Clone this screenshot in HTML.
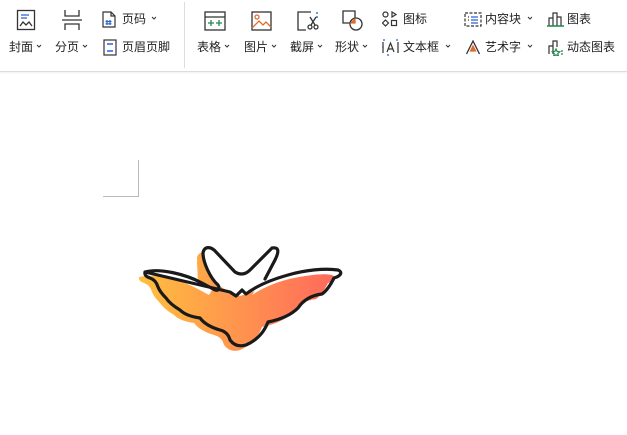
<!DOCTYPE html>
<html><head><meta charset="utf-8"><style>
body{margin:0;width:627px;height:435px;background:#fff;position:relative;overflow:hidden;font-family:"Liberation Sans","Noto Sans CJK SC",sans-serif;font-size:12px;color:#222}
.bar{position:absolute;left:0;top:0;width:627px;height:71px;background:#fff;border-bottom:1px solid #dcdcdc;box-shadow:0 1px 2px rgba(0,0,0,.06)}
.t{position:absolute;white-space:nowrap;line-height:14px}
.c{display:inline-block;width:6px;height:6px;margin-left:3px;vertical-align:2px}
svg.i{position:absolute}
</style></head><body>
<div class="bar">
<svg class="i" style="left:16px;top:9px" width="20" height="22" viewBox="0 0 20 22" fill="none" stroke="#333" stroke-width="1.3"><rect x="1.5" y="1.5" width="17" height="19"/><path d="M5 6h8M5 9h6" stroke="#2a62d6"/><path d="M4 17l3-4 3 3 3-3 3 4"/></svg>
<div class="t" style="left:9px;top:40px">封面<svg class="c" viewBox="0 0 6 6"><path d="M1 2l2 2 2-2" stroke="#333" fill="none"/></svg></div>
<svg class="i" style="left:61px;top:9px" width="22" height="22" viewBox="0 0 22 22" fill="none" stroke="#333" stroke-width="1.3"><path d="M4 1v6h14V1M1 11h20M4 21v-6h14v6"/></svg>
<div class="t" style="left:55px;top:40px">分页<svg class="c" viewBox="0 0 6 6"><path d="M1 2l2 2 2-2" stroke="#333" fill="none"/></svg></div>
<svg class="i" style="left:102px;top:11px" width="14" height="17" viewBox="0 0 14 17" fill="none" stroke="#333" stroke-width="1.2"><path d="M1 1h8l4 4v11H1z M9 1v4h4"/><path d="M5 9v5M8 9v5M3.5 10.5h6M3.5 12.8h6" stroke="#2a62d6"/></svg>
<div class="t" style="left:122px;top:12px">页码<svg class="c" style="margin-left:5px" viewBox="0 0 6 6"><path d="M1 2l2 2 2-2" stroke="#333" fill="none"/></svg></div>
<svg class="i" style="left:103px;top:39px" width="14" height="17" viewBox="0 0 14 17" fill="none" stroke="#333" stroke-width="1.2"><rect x="1" y="1" width="12" height="15"/><path d="M4 5h6M4 12h6" stroke="#2a62d6" stroke-width="1.6"/></svg>
<div class="t" style="left:122px;top:40px">页眉页脚</div>
<div style="position:absolute;left:184px;top:2px;width:1px;height:66px;background:#ddd"></div>
<svg class="i" style="left:204px;top:11px" width="22" height="20" viewBox="0 0 22 20" fill="none" stroke="#333" stroke-width="1.3"><rect x="1" y="1" width="20" height="18"/><path d="M1 6h20"/><path d="M4 12h6M7 9v6M12 12h6M15 9v6" stroke="#1f8a4c"/></svg>
<div class="t" style="left:197px;top:40px">表格<svg class="c" viewBox="0 0 6 6"><path d="M1 2l2 2 2-2" stroke="#333" fill="none"/></svg></div>
<svg class="i" style="left:251px;top:11px" width="21" height="20" viewBox="0 0 21 20" fill="none" stroke="#333" stroke-width="1.3"><rect x="1" y="1" width="19" height="18"/><circle cx="6" cy="6" r="2" stroke="#e06a2a"/><path d="M1 17l7-7 4 4 3-3 5 5" stroke="#e06a2a"/></svg>
<div class="t" style="left:244px;top:40px">图片<svg class="c" viewBox="0 0 6 6"><path d="M1 2l2 2 2-2" stroke="#333" fill="none"/></svg></div>
<svg class="i" style="left:297px;top:11px" width="22" height="20" viewBox="0 0 22 20" fill="none" stroke="#333" stroke-width="1.3"><path d="M14 1H1v18h8"/><path d="M20 1v6" stroke="#2a62d6" stroke-dasharray="2 2"/><circle cx="13" cy="16" r="2"/><circle cx="19" cy="16" r="2"/><path d="M14 14l5-8M18 14l-5-8"/></svg>
<div class="t" style="left:290px;top:40px">截屏<svg class="c" viewBox="0 0 6 6"><path d="M1 2l2 2 2-2" stroke="#333" fill="none"/></svg></div>
<svg class="i" style="left:342px;top:10px" width="22" height="22" viewBox="0 0 22 22" fill="none" stroke="#333" stroke-width="1.3"><path d="M13 9V1H1v12h8"/><circle cx="14" cy="14" r="6"/><path d="M9 13l4-4v4z" fill="#e06a2a" stroke="#e06a2a"/></svg>
<div class="t" style="left:335px;top:40px">形状<svg class="c" viewBox="0 0 6 6"><path d="M1 2l2 2 2-2" stroke="#333" fill="none"/></svg></div>
<svg class="i" style="left:382px;top:11px" width="16" height="16" viewBox="0 0 16 16" fill="none" stroke="#333" stroke-width="1.2"><circle cx="3.5" cy="3.5" r="2.5"/><path d="M10 1v5l4-2.5z"/><path d="M3.5 9l3 3-3 3-3-3z"/><rect x="9.5" y="9.5" width="5" height="5"/></svg>
<div class="t" style="left:403px;top:12px">图标</div>
<svg class="i" style="left:382px;top:39px" width="17" height="17" viewBox="0 0 17 17" fill="none" stroke="#333" stroke-width="1.2"><path d="M1 1h15v15H1z" stroke="#2a62d6" stroke-dasharray="2 11"/><path d="M1 3v11M16 3v11"/><path d="M5 13l3.5-9 3.5 9M6.2 10h4.6"/></svg>
<div class="t" style="left:403px;top:40px">文本框<svg class="c" style="margin-left:6px" viewBox="0 0 6 6"><path d="M1 2l2 2 2-2" stroke="#333" fill="none"/></svg></div>
<svg class="i" style="left:464px;top:12px" width="18" height="15" viewBox="0 0 18 15" fill="none" stroke="#333" stroke-width="1.2"><path d="M1 1h16v13H1z" stroke-dasharray="3 1.5"/><path d="M7 5h7M7 8h7M7 11h7" stroke="#2a62d6"/><path d="M4 5h1M4 8h1"/></svg>
<div class="t" style="left:485px;top:12px">内容块<svg class="c" style="margin-left:6px" viewBox="0 0 6 6"><path d="M1 2l2 2 2-2" stroke="#333" fill="none"/></svg></div>
<svg class="i" style="left:465px;top:40px" width="16" height="15" viewBox="0 0 16 15" fill="none" stroke="#333" stroke-width="1.3"><path d="M1.5 14L8 1l6.5 13"/><path d="M5.5 11h5L8 6z" fill="#e06a2a" stroke="#e06a2a"/></svg>
<div class="t" style="left:485px;top:40px">艺术字<svg class="c" style="margin-left:6px" viewBox="0 0 6 6"><path d="M1 2l2 2 2-2" stroke="#333" fill="none"/></svg></div>
<svg class="i" style="left:547px;top:11px" width="17" height="16" viewBox="0 0 17 16" fill="none" stroke="#333" stroke-width="1.2"><path d="M2 15V7h4v8M6 15V2h4v13M10 15V6h4v9"/><path d="M0 15h17" stroke="#1f8a4c" stroke-width="1.4"/></svg>
<div class="t" style="left:567px;top:12px">图表</div>
<svg class="i" style="left:547px;top:39px" width="17" height="17" viewBox="0 0 17 17" fill="none" stroke="#333" stroke-width="1.2"><path d="M2 15V7h4M6 15V2h4v6"/><path d="M9 10l1.2 2.5 2.6.3-2 1.8.6 2.5-2.4-1.3-2.3 1.3.5-2.5-2-1.8 2.6-.3z" stroke="#1f8a4c"/><path d="M14 12h2M14 15h2" stroke="#1f8a4c"/></svg>
<div class="t" style="left:567px;top:40px">动态图表</div>
</div>
<div style="position:absolute;left:138px;top:160px;width:1px;height:37px;background:#bbb"></div>
<div style="position:absolute;left:103px;top:196px;width:36px;height:1px;background:#bbb"></div>
<svg style="position:absolute;left:0;top:0" width="627" height="435" viewBox="0 0 627 435">
<defs><linearGradient id="g" x1="138" x2="340" y1="0" y2="0" gradientUnits="userSpaceOnUse"><stop offset="0" stop-color="#ffc23e"/><stop offset="1" stop-color="#ff6a5c"/></linearGradient>
<path id="w" d="M145 272C160 268 185 274 202 283L215 290 218 285C210 278 203 262 203 253C204 246 211 246 216 252L235 272C240 275 245 275 250 270L272 248C278 247 280 250 275 260L265 280 258 290C270 282 285 276 300 273C315 270 330 268 338 270C343 272 341 276 334 278Q328 290 322 294Q306 296 298 308Q288 318 268 322Q262 338 246 345Q236 348 230 340Q228 332 220 330Q206 326 200 318Q186 316 180 310Q170 304 166 298Q160 292 158 287Q156 280 150 278Q144 276 145 272Z"/></defs>
<use href="#w" transform="translate(-6,5)" fill="url(#g)"/>
<path fill="url(#g)" d="M197 262C200 252 206 258 210 268L208 284 198 282Z"/>
<path fill="#fff" d="M203 253C204 246 211 246 216 252L235 272C240 275 245 275 250 270L272 248C278 247 280 250 275 260L265 280 258 290 240 296 226 290 218 285C210 278 203 262 203 253Z"/>
<path fill="none" stroke="#1a1a1a" stroke-width="3.2" stroke-linejoin="round" stroke-linecap="round" d="M145 272C160 268 185 274 202 283L215 290C219 291 220 288 218 285C210 278 203 262 203 253C204 246 211 246 216 252L235 272C240 275 245 275 250 270L272 248C278 247 280 250 275 260L265 279 M230 292L236 296 242 290 246 294C255 287 270 280 288 275C305 270 325 268 338 270C343 272 341 276 334 278Q328 290 322 294Q306 296 298 308Q288 318 268 322Q262 338 246 345Q236 348 230 340Q228 332 220 330Q206 326 200 318Q186 316 180 310Q170 304 166 298Q160 292 158 287Q156 280 150 278Q144 276 145 272Z"/>
</svg>
</body></html>
